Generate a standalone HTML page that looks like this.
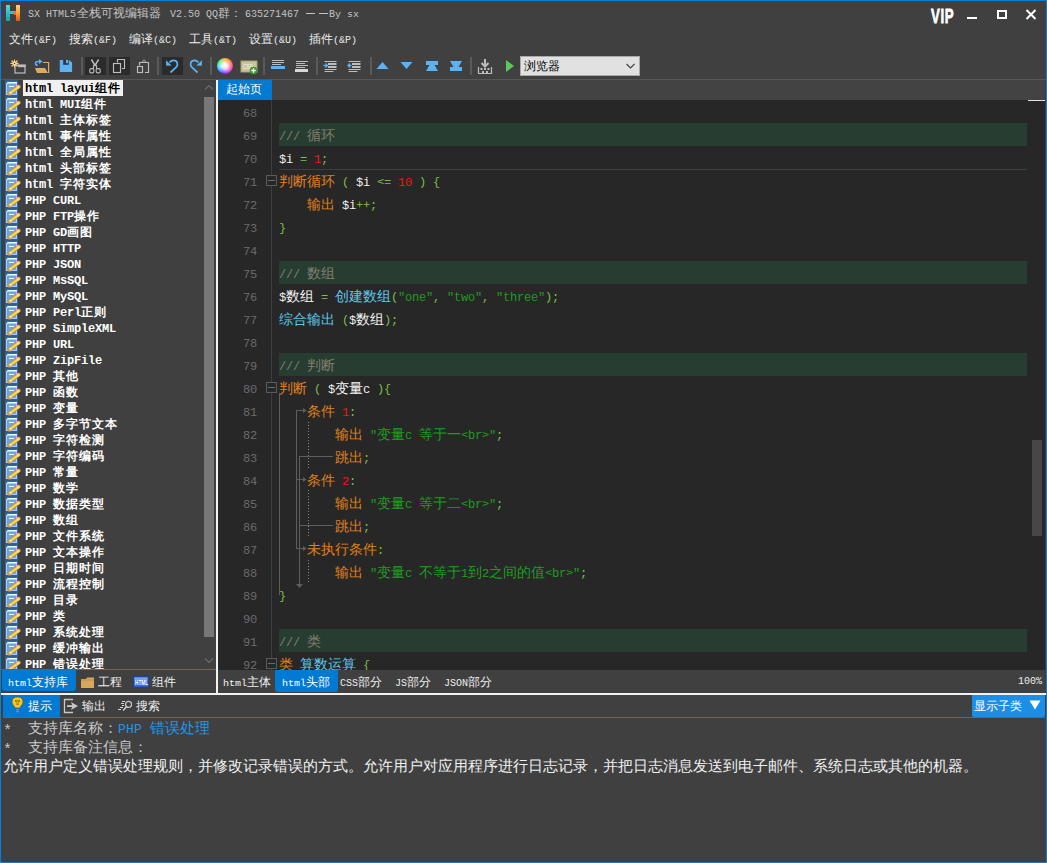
<!DOCTYPE html>
<html><head><meta charset="utf-8"><style>
@font-face{font-family:"LM";src:local("Liberation Mono");unicode-range:U+0020-007E;size-adjust:83.333%}
@font-face{font-family:"LM";src:local("Liberation Mono Bold"),local("LiberationMono-Bold");font-weight:bold;unicode-range:U+0020-007E;size-adjust:83.333%}
html,body{margin:0;padding:0;width:1047px;height:863px;overflow:hidden;background:#404040}
.r{position:absolute;display:block}
.t{position:absolute;white-space:pre;font-family:"LM","Liberation Sans",sans-serif}
@font-face{font-family:"LMB";src:local("Liberation Mono Bold"),local("LiberationMono-Bold");unicode-range:U+0020-007E;size-adjust:97.2%}
.lb{font-family:"LMB","Liberation Sans",sans-serif;font-weight:bold}
.cj{letter-spacing:1px}
@font-face{font-family:"LM8";src:local("Liberation Mono");unicode-range:U+0020-007E;size-adjust:88.89%}
.p{font-family:"LM8","Liberation Sans",sans-serif}
.c{font-family:"LM","Liberation Sans",sans-serif;font-weight:350}
</style></head><body>
<div class="r" style="left:0px;top:0px;width:1047px;height:863px;background:#0580dc;"></div>
<div class="r" style="left:1px;top:1px;width:1045px;height:861px;background:#404040;"></div>
<svg class="r" style="left:5px;top:4px;" width="17" height="18" viewBox="0 0 17 18"><defs><linearGradient id="hl" x1="0" y1="0" x2="0" y2="1"><stop offset="0" stop-color="#5fd6d8"/><stop offset="1" stop-color="#139fa6"/></linearGradient>
<linearGradient id="hr" x1="0" y1="0" x2="0" y2="1"><stop offset="0" stop-color="#ffd27a"/><stop offset="0.5" stop-color="#f5a531"/><stop offset="1" stop-color="#e0541c"/></linearGradient></defs>
<rect x="1" y="1" width="4" height="16" fill="url(#hl)"/><rect x="5" y="7" width="6" height="3" fill="#2cc4d0"/><rect x="9" y="8" width="2" height="3" fill="#f06a1e"/>
<rect x="11" y="1" width="4" height="16" fill="url(#hr)"/></svg>
<div class="t u" style="left:28px;top:9px;font-size:12px;line-height:12px;color:#c4c4c4;">SX HTML5</div>
<div class="t u" style="left:77px;top:9px;font-size:12px;line-height:12px;color:#c4c4c4;">全栈可视编辑器</div>
<div class="t u" style="left:170px;top:9px;font-size:12px;line-height:12px;color:#c4c4c4;">V2.50 QQ</div>
<div class="t u" style="left:218px;top:9px;font-size:12px;line-height:12px;color:#c4c4c4;">群：</div>
<div class="t u" style="left:245px;top:9px;font-size:12px;line-height:12px;color:#c4c4c4;">635271467</div>
<div class="t u" style="left:329px;top:9px;font-size:12px;line-height:12px;color:#c4c4c4;">By sx</div>
<div class="r" style="left:306px;top:13px;width:9px;height:1px;background:#c4c4c4;"></div>
<div class="r" style="left:319px;top:13px;width:9px;height:1px;background:#c4c4c4;"></div>
<div class="t" style="left:931px;top:6px;font-family:'Liberation Sans',sans-serif;font-weight:bold;font-size:20px;line-height:20px;color:#fff;transform:scaleX(0.66);transform-origin:0 0;letter-spacing:1px;-webkit-text-stroke:0.8px #fff">VIP</div>
<div class="r" style="left:967px;top:17px;width:10px;height:2px;background:#fff;"></div>
<div class="r" style="left:997px;top:10px;width:6px;height:5px;border:2px solid #fff"></div>
<svg class="r" style="left:1025px;top:9px;" width="12" height="11" viewBox="0 0 12 11"><path d="M1.5 1 L10.5 10 M10.5 1 L1.5 10" stroke="#fff" stroke-width="2"/></svg>
<div class="t u" style="left:9px;top:35px;font-size:12px;line-height:12px;color:#ececec;">文件(&amp;F)</div>
<div class="t u" style="left:69px;top:35px;font-size:12px;line-height:12px;color:#ececec;">搜索(&amp;F)</div>
<div class="t u" style="left:129px;top:35px;font-size:12px;line-height:12px;color:#ececec;">编译(&amp;C)</div>
<div class="t u" style="left:189px;top:35px;font-size:12px;line-height:12px;color:#ececec;">工具(&amp;T)</div>
<div class="t u" style="left:249px;top:35px;font-size:12px;line-height:12px;color:#ececec;">设置(&amp;U)</div>
<div class="t u" style="left:309px;top:35px;font-size:12px;line-height:12px;color:#ececec;">插件(&amp;P)</div>
<div class="r" style="left:85px;top:57px;width:21px;height:18px;background:#2b2b2b;"></div>
<div class="r" style="left:109px;top:57px;width:21px;height:18px;background:#2b2b2b;"></div>
<div class="r" style="left:162px;top:57px;width:21px;height:18px;background:#2b2b2b;"></div>
<div class="r" style="left:81px;top:57px;width:2px;height:18px;background:#5a5a5a;"></div>
<div class="r" style="left:157px;top:57px;width:2px;height:18px;background:#5a5a5a;"></div>
<div class="r" style="left:210px;top:57px;width:2px;height:18px;background:#5a5a5a;"></div>
<div class="r" style="left:263px;top:57px;width:2px;height:18px;background:#5a5a5a;"></div>
<div class="r" style="left:316px;top:57px;width:2px;height:18px;background:#5a5a5a;"></div>
<div class="r" style="left:370px;top:57px;width:2px;height:18px;background:#5a5a5a;"></div>
<div class="r" style="left:470px;top:57px;width:2px;height:18px;background:#5a5a5a;"></div>
<svg class="r" style="left:8px;top:56px;" width="20" height="20" viewBox="0 0 20 20"><rect x="7" y="9" width="10" height="8" fill="none" stroke="#bdbdbd" stroke-width="1.2"/><rect x="10" y="9" width="7.6" height="2.2" fill="#bdbdbd"/>
<g stroke="#ffd28a" stroke-width="1.2" stroke-linecap="round"><path d="M6.5 4 V11 M3 7.4 H10 M4 5 L9 10 M9 5 L4 10"/></g><circle cx="6.5" cy="7.4" r="1.8" fill="#ffd28a"/><circle cx="6.5" cy="7.4" r="0.7" fill="#404040"/></svg>
<svg class="r" style="left:34px;top:58px;" width="17" height="17" viewBox="0 0 17 17"><path d="M9 4.5 H14.6 V15" fill="none" stroke="#e0aa60" stroke-width="1.2"/><path d="M1 10 H11 L14 15 H3 Z" fill="#dcaa62"/>
<path d="M3.5 7.5 C0.5 6.5 0.8 3.5 4.5 3.5 H6.5" fill="none" stroke="#5cb2f2" stroke-width="1.6"/><path d="M5 1 L8.5 3.5 L5 6 Z" fill="#5cb2f2"/></svg>
<svg class="r" style="left:59px;top:59px;" width="14" height="14" viewBox="0 0 14 14"><path d="M0.8 0.9 H10 L13.1 3.6 V13.1 H0.8 Z" fill="#5cb2f2"/><rect x="4.2" y="0.9" width="5.5" height="4.9" fill="#363636"/><rect x="7" y="0.9" width="2" height="3.3" fill="#5cb2f2"/></svg>
<svg class="r" style="left:88px;top:58px;" width="15" height="16" viewBox="0 0 15 16"><g fill="none" stroke="#bdbdbd"><path d="M3.4 1.5 L7 7.3 L10.6 1.5" stroke-width="1.5"/><path d="M5.5 7.2 V10.8 M8.5 7.2 V10.8 M5.5 7.2 H8.5" stroke-width="1.1"/><rect x="1.8" y="10.6" width="4" height="4.3" rx="1.2" stroke-width="1.1"/><rect x="8.2" y="10.6" width="4" height="4.3" rx="1.2" stroke-width="1.1"/></g></svg>
<svg class="r" style="left:112px;top:58px;" width="15" height="16" viewBox="0 0 15 16"><g fill="none" stroke="#bdbdbd" stroke-width="1.15"><path d="M5.5 4.5 V1.5 H12.5 V10.5 H10"/><rect x="1.5" y="5.5" width="7" height="9"/></g></svg>
<svg class="r" style="left:136px;top:58px;" width="15" height="16" viewBox="0 0 15 16"><g fill="none" stroke="#bdbdbd" stroke-width="1.15"><path d="M3.5 7.5 V4.5 H12.5 V14.5 H9"/><rect x="1.5" y="8.5" width="5" height="6"/></g><path d="M5.6 5 L7 2 Q8 0.8 9 2 L10.4 5 Z" fill="#bdbdbd"/><circle cx="8" cy="3.2" r="0.9" fill="#404040"/></svg>
<svg class="r" style="left:164px;top:58px;" width="17" height="17" viewBox="0 0 17 17"><path d="M6.5 14.5 L12 9.5 C14.6 7 13.6 2.3 9.5 2.3 C8 2.3 6.8 3 5.6 4.4" fill="none" stroke="#5cb2f2" stroke-width="1.7"/><path d="M2 2.2 L2.2 7.8 L7.6 7.4 Z" fill="#5cb2f2"/></svg>
<svg class="r" style="left:188px;top:58px;" width="17" height="17" viewBox="0 0 17 17"><path d="M9.5 14.5 L4 9.5 C1.4 7 2.4 2.3 6.5 2.3 C8 2.3 9.2 3 10.4 4.4" fill="none" stroke="#5cb2f2" stroke-width="1.7"/><path d="M14 2.2 L13.8 7.8 L8.4 7.4 Z" fill="#5cb2f2"/></svg>
<div class="r" style="left:217px;top:58px;width:16px;height:16px;border-radius:50%;background:radial-gradient(circle at 50% 50%, #fff 0, rgba(255,255,255,0.85) 25%, rgba(255,255,255,0) 75%),conic-gradient(#ffa000, #ff2a50 90deg, #c000e0 150deg, #3020ff 200deg, #10d0ff 260deg, #30f060 310deg, #ffa000)"></div>
<svg class="r" style="left:240px;top:60px;" width="19" height="15" viewBox="0 0 19 15"><rect x="1" y="1" width="16" height="11" fill="#c9c59a" stroke="#a6a278"/><text x="3" y="9" font-size="7" fill="#f4f4e8" font-family="Liberation Sans" textLength="10" lengthAdjust="spacingAndGlyphs">CSS</text>
<circle cx="13.5" cy="10.5" r="3.8" fill="#3a9a30"/><path d="M13.5 8.3 V12.7 M11.3 10.5 H15.7" stroke="#fff" stroke-width="1.3"/></svg>
<svg class="r" style="left:271px;top:59px;" width="15" height="12" viewBox="0 0 15 12"><g fill="#bdbdbd"><rect x="1" y="1" width="12" height="1"/><rect x="1" y="3" width="12" height="1"/><rect x="1" y="5" width="9" height="1"/></g><rect x="0" y="7" width="14" height="3" fill="#5cb2f2"/></svg>
<svg class="r" style="left:295px;top:59px;" width="14" height="14" viewBox="0 0 14 14"><g fill="#bdbdbd"><rect x="1" y="2" width="12" height="1"/><rect x="1" y="4" width="9" height="1"/><rect x="1" y="6" width="12" height="1"/><rect x="1" y="8" width="9" height="1"/></g><rect x="0" y="10" width="13" height="3" fill="#d8d8d8"/></svg>
<svg class="r" style="left:323px;top:59px;" width="16" height="15" viewBox="0 0 16 15"><g fill="#bdbdbd"><rect x="1.5" y="2" width="12" height="1"/><rect x="5" y="4" width="8.5" height="2"/><rect x="5" y="7" width="8.5" height="2"/><rect x="1.5" y="10" width="12" height="1"/><rect x="1.5" y="12" width="9" height="1"/></g><path d="M0.5 6.5 H4 M2.5 4.5 L4.5 6.5 L2.5 8.5" stroke="#5cb2f2" stroke-width="1.3" fill="none"/></svg>
<svg class="r" style="left:347px;top:59px;" width="16" height="15" viewBox="0 0 16 15"><g fill="#bdbdbd"><rect x="1.5" y="2" width="12" height="1"/><rect x="5" y="4" width="8.5" height="2"/><rect x="5" y="7" width="8.5" height="2"/><rect x="1.5" y="10" width="12" height="1"/><rect x="1.5" y="12" width="9" height="1"/></g><path d="M1 6.5 H4.5 M3 4.5 L1 6.5 L3 8.5" stroke="#5cb2f2" stroke-width="1.3" fill="none"/></svg>
<svg class="r" style="left:376px;top:61px;" width="14" height="9" viewBox="0 0 14 9"><path d="M0.5 8 L6.5 1 L12.5 8 Z" fill="#5cb2f2"/></svg>
<svg class="r" style="left:400px;top:61px;" width="14" height="9" viewBox="0 0 14 9"><path d="M0.5 1 L6.5 8 L12.5 1 Z" fill="#5cb2f2"/></svg>
<svg class="r" style="left:425px;top:60px;" width="14" height="12" viewBox="0 0 14 12"><path d="M1 1 H13 V5 H9.5 L13 11 H1 L4.5 5 H1 Z" fill="#5cb2f2"/></svg>
<svg class="r" style="left:449px;top:60px;" width="14" height="12" viewBox="0 0 14 12"><path d="M1 1 H13 L9.5 7 H13 V11 H1 V7 H4.5 Z" fill="#5cb2f2"/></svg>
<svg class="r" style="left:477px;top:58px;" width="16" height="17" viewBox="0 0 16 17"><path d="M8 1 V8 M4.5 5 L8 8.5 L11.5 5" stroke="#bdbdbd" stroke-width="2" fill="none"/><path d="M1.5 9 V15.5 H14.5 V9" stroke="#bdbdbd" stroke-width="1.2" fill="none"/>
<g fill="#bdbdbd"><rect x="3.5" y="10" width="2" height="2"/><rect x="7" y="10" width="2" height="2"/><rect x="10.5" y="10" width="2" height="2"/><rect x="5" y="13" width="2" height="2"/><rect x="9" y="13" width="2" height="2"/></g></svg>
<svg class="r" style="left:505px;top:59px;" width="10" height="14" viewBox="0 0 10 14"><path d="M1 1 L9 7 L1 13 Z" fill="#5cc85c"/></svg>
<div class="r" style="left:520px;top:56px;width:118px;height:18px;background:#e1e1e1;border:1px solid #a9a9a9"></div>
<div class="t u" style="left:524px;top:62px;font-size:12px;line-height:12px;color:#000;">浏览器</div>
<svg class="r" style="left:626px;top:63px;" width="10" height="7" viewBox="0 0 10 7"><path d="M0.5 1 L4.5 5 L8.5 1" stroke="#444" stroke-width="1.2" fill="none"/></svg>
<div class="r" style="left:1px;top:79px;width:1045px;height:1px;background:#575757;"></div>
<div class="r" style="left:1px;top:80px;width:202px;height:589px;overflow:hidden">
<svg class="r" style="left:4px;top:0px" width="17" height="17" viewBox="0 0 17 17">
<rect x="0" y="0.3" width="13" height="15.5" fill="#3466b0"/><rect x="1" y="3" width="11" height="12" fill="#a9cdee"/><rect x="2" y="4" width="9" height="10" fill="#6fa5dc"/>
<rect x="2.2" y="2" width="9.8" height="1" fill="#f4f8ff"/><rect x="4" y="6" width="5" height="1" fill="#e8f4ff"/>
<path d="M4.5 13.6 L13.8 6.5" stroke="#d88a30" stroke-width="4" stroke-linecap="round"/><path d="M4.8 13.3 L13.5 6.8" stroke="#f8dc58" stroke-width="2.2"/>
<path d="M12.4 7.6 L14.2 6.2" stroke="#ffdcb0" stroke-width="2.6"/><path d="M4.3 13.8 L6.2 12.3" stroke="#ffd8a8" stroke-width="2.6"/></svg>
<div class="r" style="left:22px;top:0px;width:100px;height:16px;background:#f0f0f0"></div>
<div class="t lb" style="left:24px;top:3px;font-size:12px;line-height:12px;color:#000;">html layui<span class="cj">组件</span></div>
<svg class="r" style="left:4px;top:16px" width="17" height="17" viewBox="0 0 17 17">
<rect x="0" y="0.3" width="13" height="15.5" fill="#3466b0"/><rect x="1" y="3" width="11" height="12" fill="#a9cdee"/><rect x="2" y="4" width="9" height="10" fill="#6fa5dc"/>
<rect x="2.2" y="2" width="9.8" height="1" fill="#f4f8ff"/><rect x="4" y="6" width="5" height="1" fill="#e8f4ff"/>
<path d="M4.5 13.6 L13.8 6.5" stroke="#d88a30" stroke-width="4" stroke-linecap="round"/><path d="M4.8 13.3 L13.5 6.8" stroke="#f8dc58" stroke-width="2.2"/>
<path d="M12.4 7.6 L14.2 6.2" stroke="#ffdcb0" stroke-width="2.6"/><path d="M4.3 13.8 L6.2 12.3" stroke="#ffd8a8" stroke-width="2.6"/></svg>
<div class="t lb" style="left:24px;top:19px;font-size:12px;line-height:12px;color:#ffffff;">html MUI<span class="cj">组件</span></div>
<svg class="r" style="left:4px;top:32px" width="17" height="17" viewBox="0 0 17 17">
<rect x="0" y="0.3" width="13" height="15.5" fill="#3466b0"/><rect x="1" y="3" width="11" height="12" fill="#a9cdee"/><rect x="2" y="4" width="9" height="10" fill="#6fa5dc"/>
<rect x="2.2" y="2" width="9.8" height="1" fill="#f4f8ff"/><rect x="4" y="6" width="5" height="1" fill="#e8f4ff"/>
<path d="M4.5 13.6 L13.8 6.5" stroke="#d88a30" stroke-width="4" stroke-linecap="round"/><path d="M4.8 13.3 L13.5 6.8" stroke="#f8dc58" stroke-width="2.2"/>
<path d="M12.4 7.6 L14.2 6.2" stroke="#ffdcb0" stroke-width="2.6"/><path d="M4.3 13.8 L6.2 12.3" stroke="#ffd8a8" stroke-width="2.6"/></svg>
<div class="t lb" style="left:24px;top:35px;font-size:12px;line-height:12px;color:#ffffff;">html <span class="cj">主体标签</span></div>
<svg class="r" style="left:4px;top:48px" width="17" height="17" viewBox="0 0 17 17">
<rect x="0" y="0.3" width="13" height="15.5" fill="#3466b0"/><rect x="1" y="3" width="11" height="12" fill="#a9cdee"/><rect x="2" y="4" width="9" height="10" fill="#6fa5dc"/>
<rect x="2.2" y="2" width="9.8" height="1" fill="#f4f8ff"/><rect x="4" y="6" width="5" height="1" fill="#e8f4ff"/>
<path d="M4.5 13.6 L13.8 6.5" stroke="#d88a30" stroke-width="4" stroke-linecap="round"/><path d="M4.8 13.3 L13.5 6.8" stroke="#f8dc58" stroke-width="2.2"/>
<path d="M12.4 7.6 L14.2 6.2" stroke="#ffdcb0" stroke-width="2.6"/><path d="M4.3 13.8 L6.2 12.3" stroke="#ffd8a8" stroke-width="2.6"/></svg>
<div class="t lb" style="left:24px;top:51px;font-size:12px;line-height:12px;color:#ffffff;">html <span class="cj">事件属性</span></div>
<svg class="r" style="left:4px;top:64px" width="17" height="17" viewBox="0 0 17 17">
<rect x="0" y="0.3" width="13" height="15.5" fill="#3466b0"/><rect x="1" y="3" width="11" height="12" fill="#a9cdee"/><rect x="2" y="4" width="9" height="10" fill="#6fa5dc"/>
<rect x="2.2" y="2" width="9.8" height="1" fill="#f4f8ff"/><rect x="4" y="6" width="5" height="1" fill="#e8f4ff"/>
<path d="M4.5 13.6 L13.8 6.5" stroke="#d88a30" stroke-width="4" stroke-linecap="round"/><path d="M4.8 13.3 L13.5 6.8" stroke="#f8dc58" stroke-width="2.2"/>
<path d="M12.4 7.6 L14.2 6.2" stroke="#ffdcb0" stroke-width="2.6"/><path d="M4.3 13.8 L6.2 12.3" stroke="#ffd8a8" stroke-width="2.6"/></svg>
<div class="t lb" style="left:24px;top:67px;font-size:12px;line-height:12px;color:#ffffff;">html <span class="cj">全局属性</span></div>
<svg class="r" style="left:4px;top:80px" width="17" height="17" viewBox="0 0 17 17">
<rect x="0" y="0.3" width="13" height="15.5" fill="#3466b0"/><rect x="1" y="3" width="11" height="12" fill="#a9cdee"/><rect x="2" y="4" width="9" height="10" fill="#6fa5dc"/>
<rect x="2.2" y="2" width="9.8" height="1" fill="#f4f8ff"/><rect x="4" y="6" width="5" height="1" fill="#e8f4ff"/>
<path d="M4.5 13.6 L13.8 6.5" stroke="#d88a30" stroke-width="4" stroke-linecap="round"/><path d="M4.8 13.3 L13.5 6.8" stroke="#f8dc58" stroke-width="2.2"/>
<path d="M12.4 7.6 L14.2 6.2" stroke="#ffdcb0" stroke-width="2.6"/><path d="M4.3 13.8 L6.2 12.3" stroke="#ffd8a8" stroke-width="2.6"/></svg>
<div class="t lb" style="left:24px;top:83px;font-size:12px;line-height:12px;color:#ffffff;">html <span class="cj">头部标签</span></div>
<svg class="r" style="left:4px;top:96px" width="17" height="17" viewBox="0 0 17 17">
<rect x="0" y="0.3" width="13" height="15.5" fill="#3466b0"/><rect x="1" y="3" width="11" height="12" fill="#a9cdee"/><rect x="2" y="4" width="9" height="10" fill="#6fa5dc"/>
<rect x="2.2" y="2" width="9.8" height="1" fill="#f4f8ff"/><rect x="4" y="6" width="5" height="1" fill="#e8f4ff"/>
<path d="M4.5 13.6 L13.8 6.5" stroke="#d88a30" stroke-width="4" stroke-linecap="round"/><path d="M4.8 13.3 L13.5 6.8" stroke="#f8dc58" stroke-width="2.2"/>
<path d="M12.4 7.6 L14.2 6.2" stroke="#ffdcb0" stroke-width="2.6"/><path d="M4.3 13.8 L6.2 12.3" stroke="#ffd8a8" stroke-width="2.6"/></svg>
<div class="t lb" style="left:24px;top:99px;font-size:12px;line-height:12px;color:#ffffff;">html <span class="cj">字符实体</span></div>
<svg class="r" style="left:4px;top:112px" width="17" height="17" viewBox="0 0 17 17">
<rect x="0" y="0.3" width="13" height="15.5" fill="#3466b0"/><rect x="1" y="3" width="11" height="12" fill="#a9cdee"/><rect x="2" y="4" width="9" height="10" fill="#6fa5dc"/>
<rect x="2.2" y="2" width="9.8" height="1" fill="#f4f8ff"/><rect x="4" y="6" width="5" height="1" fill="#e8f4ff"/>
<path d="M4.5 13.6 L13.8 6.5" stroke="#d88a30" stroke-width="4" stroke-linecap="round"/><path d="M4.8 13.3 L13.5 6.8" stroke="#f8dc58" stroke-width="2.2"/>
<path d="M12.4 7.6 L14.2 6.2" stroke="#ffdcb0" stroke-width="2.6"/><path d="M4.3 13.8 L6.2 12.3" stroke="#ffd8a8" stroke-width="2.6"/></svg>
<div class="t lb" style="left:24px;top:115px;font-size:12px;line-height:12px;color:#ffffff;">PHP CURL</div>
<svg class="r" style="left:4px;top:128px" width="17" height="17" viewBox="0 0 17 17">
<rect x="0" y="0.3" width="13" height="15.5" fill="#3466b0"/><rect x="1" y="3" width="11" height="12" fill="#a9cdee"/><rect x="2" y="4" width="9" height="10" fill="#6fa5dc"/>
<rect x="2.2" y="2" width="9.8" height="1" fill="#f4f8ff"/><rect x="4" y="6" width="5" height="1" fill="#e8f4ff"/>
<path d="M4.5 13.6 L13.8 6.5" stroke="#d88a30" stroke-width="4" stroke-linecap="round"/><path d="M4.8 13.3 L13.5 6.8" stroke="#f8dc58" stroke-width="2.2"/>
<path d="M12.4 7.6 L14.2 6.2" stroke="#ffdcb0" stroke-width="2.6"/><path d="M4.3 13.8 L6.2 12.3" stroke="#ffd8a8" stroke-width="2.6"/></svg>
<div class="t lb" style="left:24px;top:131px;font-size:12px;line-height:12px;color:#ffffff;">PHP FTP<span class="cj">操作</span></div>
<svg class="r" style="left:4px;top:144px" width="17" height="17" viewBox="0 0 17 17">
<rect x="0" y="0.3" width="13" height="15.5" fill="#3466b0"/><rect x="1" y="3" width="11" height="12" fill="#a9cdee"/><rect x="2" y="4" width="9" height="10" fill="#6fa5dc"/>
<rect x="2.2" y="2" width="9.8" height="1" fill="#f4f8ff"/><rect x="4" y="6" width="5" height="1" fill="#e8f4ff"/>
<path d="M4.5 13.6 L13.8 6.5" stroke="#d88a30" stroke-width="4" stroke-linecap="round"/><path d="M4.8 13.3 L13.5 6.8" stroke="#f8dc58" stroke-width="2.2"/>
<path d="M12.4 7.6 L14.2 6.2" stroke="#ffdcb0" stroke-width="2.6"/><path d="M4.3 13.8 L6.2 12.3" stroke="#ffd8a8" stroke-width="2.6"/></svg>
<div class="t lb" style="left:24px;top:147px;font-size:12px;line-height:12px;color:#ffffff;">PHP GD<span class="cj">画图</span></div>
<svg class="r" style="left:4px;top:160px" width="17" height="17" viewBox="0 0 17 17">
<rect x="0" y="0.3" width="13" height="15.5" fill="#3466b0"/><rect x="1" y="3" width="11" height="12" fill="#a9cdee"/><rect x="2" y="4" width="9" height="10" fill="#6fa5dc"/>
<rect x="2.2" y="2" width="9.8" height="1" fill="#f4f8ff"/><rect x="4" y="6" width="5" height="1" fill="#e8f4ff"/>
<path d="M4.5 13.6 L13.8 6.5" stroke="#d88a30" stroke-width="4" stroke-linecap="round"/><path d="M4.8 13.3 L13.5 6.8" stroke="#f8dc58" stroke-width="2.2"/>
<path d="M12.4 7.6 L14.2 6.2" stroke="#ffdcb0" stroke-width="2.6"/><path d="M4.3 13.8 L6.2 12.3" stroke="#ffd8a8" stroke-width="2.6"/></svg>
<div class="t lb" style="left:24px;top:163px;font-size:12px;line-height:12px;color:#ffffff;">PHP HTTP</div>
<svg class="r" style="left:4px;top:176px" width="17" height="17" viewBox="0 0 17 17">
<rect x="0" y="0.3" width="13" height="15.5" fill="#3466b0"/><rect x="1" y="3" width="11" height="12" fill="#a9cdee"/><rect x="2" y="4" width="9" height="10" fill="#6fa5dc"/>
<rect x="2.2" y="2" width="9.8" height="1" fill="#f4f8ff"/><rect x="4" y="6" width="5" height="1" fill="#e8f4ff"/>
<path d="M4.5 13.6 L13.8 6.5" stroke="#d88a30" stroke-width="4" stroke-linecap="round"/><path d="M4.8 13.3 L13.5 6.8" stroke="#f8dc58" stroke-width="2.2"/>
<path d="M12.4 7.6 L14.2 6.2" stroke="#ffdcb0" stroke-width="2.6"/><path d="M4.3 13.8 L6.2 12.3" stroke="#ffd8a8" stroke-width="2.6"/></svg>
<div class="t lb" style="left:24px;top:179px;font-size:12px;line-height:12px;color:#ffffff;">PHP JSON</div>
<svg class="r" style="left:4px;top:192px" width="17" height="17" viewBox="0 0 17 17">
<rect x="0" y="0.3" width="13" height="15.5" fill="#3466b0"/><rect x="1" y="3" width="11" height="12" fill="#a9cdee"/><rect x="2" y="4" width="9" height="10" fill="#6fa5dc"/>
<rect x="2.2" y="2" width="9.8" height="1" fill="#f4f8ff"/><rect x="4" y="6" width="5" height="1" fill="#e8f4ff"/>
<path d="M4.5 13.6 L13.8 6.5" stroke="#d88a30" stroke-width="4" stroke-linecap="round"/><path d="M4.8 13.3 L13.5 6.8" stroke="#f8dc58" stroke-width="2.2"/>
<path d="M12.4 7.6 L14.2 6.2" stroke="#ffdcb0" stroke-width="2.6"/><path d="M4.3 13.8 L6.2 12.3" stroke="#ffd8a8" stroke-width="2.6"/></svg>
<div class="t lb" style="left:24px;top:195px;font-size:12px;line-height:12px;color:#ffffff;">PHP MsSQL</div>
<svg class="r" style="left:4px;top:208px" width="17" height="17" viewBox="0 0 17 17">
<rect x="0" y="0.3" width="13" height="15.5" fill="#3466b0"/><rect x="1" y="3" width="11" height="12" fill="#a9cdee"/><rect x="2" y="4" width="9" height="10" fill="#6fa5dc"/>
<rect x="2.2" y="2" width="9.8" height="1" fill="#f4f8ff"/><rect x="4" y="6" width="5" height="1" fill="#e8f4ff"/>
<path d="M4.5 13.6 L13.8 6.5" stroke="#d88a30" stroke-width="4" stroke-linecap="round"/><path d="M4.8 13.3 L13.5 6.8" stroke="#f8dc58" stroke-width="2.2"/>
<path d="M12.4 7.6 L14.2 6.2" stroke="#ffdcb0" stroke-width="2.6"/><path d="M4.3 13.8 L6.2 12.3" stroke="#ffd8a8" stroke-width="2.6"/></svg>
<div class="t lb" style="left:24px;top:211px;font-size:12px;line-height:12px;color:#ffffff;">PHP MySQL</div>
<svg class="r" style="left:4px;top:224px" width="17" height="17" viewBox="0 0 17 17">
<rect x="0" y="0.3" width="13" height="15.5" fill="#3466b0"/><rect x="1" y="3" width="11" height="12" fill="#a9cdee"/><rect x="2" y="4" width="9" height="10" fill="#6fa5dc"/>
<rect x="2.2" y="2" width="9.8" height="1" fill="#f4f8ff"/><rect x="4" y="6" width="5" height="1" fill="#e8f4ff"/>
<path d="M4.5 13.6 L13.8 6.5" stroke="#d88a30" stroke-width="4" stroke-linecap="round"/><path d="M4.8 13.3 L13.5 6.8" stroke="#f8dc58" stroke-width="2.2"/>
<path d="M12.4 7.6 L14.2 6.2" stroke="#ffdcb0" stroke-width="2.6"/><path d="M4.3 13.8 L6.2 12.3" stroke="#ffd8a8" stroke-width="2.6"/></svg>
<div class="t lb" style="left:24px;top:227px;font-size:12px;line-height:12px;color:#ffffff;">PHP Perl<span class="cj">正则</span></div>
<svg class="r" style="left:4px;top:240px" width="17" height="17" viewBox="0 0 17 17">
<rect x="0" y="0.3" width="13" height="15.5" fill="#3466b0"/><rect x="1" y="3" width="11" height="12" fill="#a9cdee"/><rect x="2" y="4" width="9" height="10" fill="#6fa5dc"/>
<rect x="2.2" y="2" width="9.8" height="1" fill="#f4f8ff"/><rect x="4" y="6" width="5" height="1" fill="#e8f4ff"/>
<path d="M4.5 13.6 L13.8 6.5" stroke="#d88a30" stroke-width="4" stroke-linecap="round"/><path d="M4.8 13.3 L13.5 6.8" stroke="#f8dc58" stroke-width="2.2"/>
<path d="M12.4 7.6 L14.2 6.2" stroke="#ffdcb0" stroke-width="2.6"/><path d="M4.3 13.8 L6.2 12.3" stroke="#ffd8a8" stroke-width="2.6"/></svg>
<div class="t lb" style="left:24px;top:243px;font-size:12px;line-height:12px;color:#ffffff;">PHP SimpleXML</div>
<svg class="r" style="left:4px;top:256px" width="17" height="17" viewBox="0 0 17 17">
<rect x="0" y="0.3" width="13" height="15.5" fill="#3466b0"/><rect x="1" y="3" width="11" height="12" fill="#a9cdee"/><rect x="2" y="4" width="9" height="10" fill="#6fa5dc"/>
<rect x="2.2" y="2" width="9.8" height="1" fill="#f4f8ff"/><rect x="4" y="6" width="5" height="1" fill="#e8f4ff"/>
<path d="M4.5 13.6 L13.8 6.5" stroke="#d88a30" stroke-width="4" stroke-linecap="round"/><path d="M4.8 13.3 L13.5 6.8" stroke="#f8dc58" stroke-width="2.2"/>
<path d="M12.4 7.6 L14.2 6.2" stroke="#ffdcb0" stroke-width="2.6"/><path d="M4.3 13.8 L6.2 12.3" stroke="#ffd8a8" stroke-width="2.6"/></svg>
<div class="t lb" style="left:24px;top:259px;font-size:12px;line-height:12px;color:#ffffff;">PHP URL</div>
<svg class="r" style="left:4px;top:272px" width="17" height="17" viewBox="0 0 17 17">
<rect x="0" y="0.3" width="13" height="15.5" fill="#3466b0"/><rect x="1" y="3" width="11" height="12" fill="#a9cdee"/><rect x="2" y="4" width="9" height="10" fill="#6fa5dc"/>
<rect x="2.2" y="2" width="9.8" height="1" fill="#f4f8ff"/><rect x="4" y="6" width="5" height="1" fill="#e8f4ff"/>
<path d="M4.5 13.6 L13.8 6.5" stroke="#d88a30" stroke-width="4" stroke-linecap="round"/><path d="M4.8 13.3 L13.5 6.8" stroke="#f8dc58" stroke-width="2.2"/>
<path d="M12.4 7.6 L14.2 6.2" stroke="#ffdcb0" stroke-width="2.6"/><path d="M4.3 13.8 L6.2 12.3" stroke="#ffd8a8" stroke-width="2.6"/></svg>
<div class="t lb" style="left:24px;top:275px;font-size:12px;line-height:12px;color:#ffffff;">PHP ZipFile</div>
<svg class="r" style="left:4px;top:288px" width="17" height="17" viewBox="0 0 17 17">
<rect x="0" y="0.3" width="13" height="15.5" fill="#3466b0"/><rect x="1" y="3" width="11" height="12" fill="#a9cdee"/><rect x="2" y="4" width="9" height="10" fill="#6fa5dc"/>
<rect x="2.2" y="2" width="9.8" height="1" fill="#f4f8ff"/><rect x="4" y="6" width="5" height="1" fill="#e8f4ff"/>
<path d="M4.5 13.6 L13.8 6.5" stroke="#d88a30" stroke-width="4" stroke-linecap="round"/><path d="M4.8 13.3 L13.5 6.8" stroke="#f8dc58" stroke-width="2.2"/>
<path d="M12.4 7.6 L14.2 6.2" stroke="#ffdcb0" stroke-width="2.6"/><path d="M4.3 13.8 L6.2 12.3" stroke="#ffd8a8" stroke-width="2.6"/></svg>
<div class="t lb" style="left:24px;top:291px;font-size:12px;line-height:12px;color:#ffffff;">PHP <span class="cj">其他</span></div>
<svg class="r" style="left:4px;top:304px" width="17" height="17" viewBox="0 0 17 17">
<rect x="0" y="0.3" width="13" height="15.5" fill="#3466b0"/><rect x="1" y="3" width="11" height="12" fill="#a9cdee"/><rect x="2" y="4" width="9" height="10" fill="#6fa5dc"/>
<rect x="2.2" y="2" width="9.8" height="1" fill="#f4f8ff"/><rect x="4" y="6" width="5" height="1" fill="#e8f4ff"/>
<path d="M4.5 13.6 L13.8 6.5" stroke="#d88a30" stroke-width="4" stroke-linecap="round"/><path d="M4.8 13.3 L13.5 6.8" stroke="#f8dc58" stroke-width="2.2"/>
<path d="M12.4 7.6 L14.2 6.2" stroke="#ffdcb0" stroke-width="2.6"/><path d="M4.3 13.8 L6.2 12.3" stroke="#ffd8a8" stroke-width="2.6"/></svg>
<div class="t lb" style="left:24px;top:307px;font-size:12px;line-height:12px;color:#ffffff;">PHP <span class="cj">函数</span></div>
<svg class="r" style="left:4px;top:320px" width="17" height="17" viewBox="0 0 17 17">
<rect x="0" y="0.3" width="13" height="15.5" fill="#3466b0"/><rect x="1" y="3" width="11" height="12" fill="#a9cdee"/><rect x="2" y="4" width="9" height="10" fill="#6fa5dc"/>
<rect x="2.2" y="2" width="9.8" height="1" fill="#f4f8ff"/><rect x="4" y="6" width="5" height="1" fill="#e8f4ff"/>
<path d="M4.5 13.6 L13.8 6.5" stroke="#d88a30" stroke-width="4" stroke-linecap="round"/><path d="M4.8 13.3 L13.5 6.8" stroke="#f8dc58" stroke-width="2.2"/>
<path d="M12.4 7.6 L14.2 6.2" stroke="#ffdcb0" stroke-width="2.6"/><path d="M4.3 13.8 L6.2 12.3" stroke="#ffd8a8" stroke-width="2.6"/></svg>
<div class="t lb" style="left:24px;top:323px;font-size:12px;line-height:12px;color:#ffffff;">PHP <span class="cj">变量</span></div>
<svg class="r" style="left:4px;top:336px" width="17" height="17" viewBox="0 0 17 17">
<rect x="0" y="0.3" width="13" height="15.5" fill="#3466b0"/><rect x="1" y="3" width="11" height="12" fill="#a9cdee"/><rect x="2" y="4" width="9" height="10" fill="#6fa5dc"/>
<rect x="2.2" y="2" width="9.8" height="1" fill="#f4f8ff"/><rect x="4" y="6" width="5" height="1" fill="#e8f4ff"/>
<path d="M4.5 13.6 L13.8 6.5" stroke="#d88a30" stroke-width="4" stroke-linecap="round"/><path d="M4.8 13.3 L13.5 6.8" stroke="#f8dc58" stroke-width="2.2"/>
<path d="M12.4 7.6 L14.2 6.2" stroke="#ffdcb0" stroke-width="2.6"/><path d="M4.3 13.8 L6.2 12.3" stroke="#ffd8a8" stroke-width="2.6"/></svg>
<div class="t lb" style="left:24px;top:339px;font-size:12px;line-height:12px;color:#ffffff;">PHP <span class="cj">多字节文本</span></div>
<svg class="r" style="left:4px;top:352px" width="17" height="17" viewBox="0 0 17 17">
<rect x="0" y="0.3" width="13" height="15.5" fill="#3466b0"/><rect x="1" y="3" width="11" height="12" fill="#a9cdee"/><rect x="2" y="4" width="9" height="10" fill="#6fa5dc"/>
<rect x="2.2" y="2" width="9.8" height="1" fill="#f4f8ff"/><rect x="4" y="6" width="5" height="1" fill="#e8f4ff"/>
<path d="M4.5 13.6 L13.8 6.5" stroke="#d88a30" stroke-width="4" stroke-linecap="round"/><path d="M4.8 13.3 L13.5 6.8" stroke="#f8dc58" stroke-width="2.2"/>
<path d="M12.4 7.6 L14.2 6.2" stroke="#ffdcb0" stroke-width="2.6"/><path d="M4.3 13.8 L6.2 12.3" stroke="#ffd8a8" stroke-width="2.6"/></svg>
<div class="t lb" style="left:24px;top:355px;font-size:12px;line-height:12px;color:#ffffff;">PHP <span class="cj">字符检测</span></div>
<svg class="r" style="left:4px;top:368px" width="17" height="17" viewBox="0 0 17 17">
<rect x="0" y="0.3" width="13" height="15.5" fill="#3466b0"/><rect x="1" y="3" width="11" height="12" fill="#a9cdee"/><rect x="2" y="4" width="9" height="10" fill="#6fa5dc"/>
<rect x="2.2" y="2" width="9.8" height="1" fill="#f4f8ff"/><rect x="4" y="6" width="5" height="1" fill="#e8f4ff"/>
<path d="M4.5 13.6 L13.8 6.5" stroke="#d88a30" stroke-width="4" stroke-linecap="round"/><path d="M4.8 13.3 L13.5 6.8" stroke="#f8dc58" stroke-width="2.2"/>
<path d="M12.4 7.6 L14.2 6.2" stroke="#ffdcb0" stroke-width="2.6"/><path d="M4.3 13.8 L6.2 12.3" stroke="#ffd8a8" stroke-width="2.6"/></svg>
<div class="t lb" style="left:24px;top:371px;font-size:12px;line-height:12px;color:#ffffff;">PHP <span class="cj">字符编码</span></div>
<svg class="r" style="left:4px;top:384px" width="17" height="17" viewBox="0 0 17 17">
<rect x="0" y="0.3" width="13" height="15.5" fill="#3466b0"/><rect x="1" y="3" width="11" height="12" fill="#a9cdee"/><rect x="2" y="4" width="9" height="10" fill="#6fa5dc"/>
<rect x="2.2" y="2" width="9.8" height="1" fill="#f4f8ff"/><rect x="4" y="6" width="5" height="1" fill="#e8f4ff"/>
<path d="M4.5 13.6 L13.8 6.5" stroke="#d88a30" stroke-width="4" stroke-linecap="round"/><path d="M4.8 13.3 L13.5 6.8" stroke="#f8dc58" stroke-width="2.2"/>
<path d="M12.4 7.6 L14.2 6.2" stroke="#ffdcb0" stroke-width="2.6"/><path d="M4.3 13.8 L6.2 12.3" stroke="#ffd8a8" stroke-width="2.6"/></svg>
<div class="t lb" style="left:24px;top:387px;font-size:12px;line-height:12px;color:#ffffff;">PHP <span class="cj">常量</span></div>
<svg class="r" style="left:4px;top:400px" width="17" height="17" viewBox="0 0 17 17">
<rect x="0" y="0.3" width="13" height="15.5" fill="#3466b0"/><rect x="1" y="3" width="11" height="12" fill="#a9cdee"/><rect x="2" y="4" width="9" height="10" fill="#6fa5dc"/>
<rect x="2.2" y="2" width="9.8" height="1" fill="#f4f8ff"/><rect x="4" y="6" width="5" height="1" fill="#e8f4ff"/>
<path d="M4.5 13.6 L13.8 6.5" stroke="#d88a30" stroke-width="4" stroke-linecap="round"/><path d="M4.8 13.3 L13.5 6.8" stroke="#f8dc58" stroke-width="2.2"/>
<path d="M12.4 7.6 L14.2 6.2" stroke="#ffdcb0" stroke-width="2.6"/><path d="M4.3 13.8 L6.2 12.3" stroke="#ffd8a8" stroke-width="2.6"/></svg>
<div class="t lb" style="left:24px;top:403px;font-size:12px;line-height:12px;color:#ffffff;">PHP <span class="cj">数学</span></div>
<svg class="r" style="left:4px;top:416px" width="17" height="17" viewBox="0 0 17 17">
<rect x="0" y="0.3" width="13" height="15.5" fill="#3466b0"/><rect x="1" y="3" width="11" height="12" fill="#a9cdee"/><rect x="2" y="4" width="9" height="10" fill="#6fa5dc"/>
<rect x="2.2" y="2" width="9.8" height="1" fill="#f4f8ff"/><rect x="4" y="6" width="5" height="1" fill="#e8f4ff"/>
<path d="M4.5 13.6 L13.8 6.5" stroke="#d88a30" stroke-width="4" stroke-linecap="round"/><path d="M4.8 13.3 L13.5 6.8" stroke="#f8dc58" stroke-width="2.2"/>
<path d="M12.4 7.6 L14.2 6.2" stroke="#ffdcb0" stroke-width="2.6"/><path d="M4.3 13.8 L6.2 12.3" stroke="#ffd8a8" stroke-width="2.6"/></svg>
<div class="t lb" style="left:24px;top:419px;font-size:12px;line-height:12px;color:#ffffff;">PHP <span class="cj">数据类型</span></div>
<svg class="r" style="left:4px;top:432px" width="17" height="17" viewBox="0 0 17 17">
<rect x="0" y="0.3" width="13" height="15.5" fill="#3466b0"/><rect x="1" y="3" width="11" height="12" fill="#a9cdee"/><rect x="2" y="4" width="9" height="10" fill="#6fa5dc"/>
<rect x="2.2" y="2" width="9.8" height="1" fill="#f4f8ff"/><rect x="4" y="6" width="5" height="1" fill="#e8f4ff"/>
<path d="M4.5 13.6 L13.8 6.5" stroke="#d88a30" stroke-width="4" stroke-linecap="round"/><path d="M4.8 13.3 L13.5 6.8" stroke="#f8dc58" stroke-width="2.2"/>
<path d="M12.4 7.6 L14.2 6.2" stroke="#ffdcb0" stroke-width="2.6"/><path d="M4.3 13.8 L6.2 12.3" stroke="#ffd8a8" stroke-width="2.6"/></svg>
<div class="t lb" style="left:24px;top:435px;font-size:12px;line-height:12px;color:#ffffff;">PHP <span class="cj">数组</span></div>
<svg class="r" style="left:4px;top:448px" width="17" height="17" viewBox="0 0 17 17">
<rect x="0" y="0.3" width="13" height="15.5" fill="#3466b0"/><rect x="1" y="3" width="11" height="12" fill="#a9cdee"/><rect x="2" y="4" width="9" height="10" fill="#6fa5dc"/>
<rect x="2.2" y="2" width="9.8" height="1" fill="#f4f8ff"/><rect x="4" y="6" width="5" height="1" fill="#e8f4ff"/>
<path d="M4.5 13.6 L13.8 6.5" stroke="#d88a30" stroke-width="4" stroke-linecap="round"/><path d="M4.8 13.3 L13.5 6.8" stroke="#f8dc58" stroke-width="2.2"/>
<path d="M12.4 7.6 L14.2 6.2" stroke="#ffdcb0" stroke-width="2.6"/><path d="M4.3 13.8 L6.2 12.3" stroke="#ffd8a8" stroke-width="2.6"/></svg>
<div class="t lb" style="left:24px;top:451px;font-size:12px;line-height:12px;color:#ffffff;">PHP <span class="cj">文件系统</span></div>
<svg class="r" style="left:4px;top:464px" width="17" height="17" viewBox="0 0 17 17">
<rect x="0" y="0.3" width="13" height="15.5" fill="#3466b0"/><rect x="1" y="3" width="11" height="12" fill="#a9cdee"/><rect x="2" y="4" width="9" height="10" fill="#6fa5dc"/>
<rect x="2.2" y="2" width="9.8" height="1" fill="#f4f8ff"/><rect x="4" y="6" width="5" height="1" fill="#e8f4ff"/>
<path d="M4.5 13.6 L13.8 6.5" stroke="#d88a30" stroke-width="4" stroke-linecap="round"/><path d="M4.8 13.3 L13.5 6.8" stroke="#f8dc58" stroke-width="2.2"/>
<path d="M12.4 7.6 L14.2 6.2" stroke="#ffdcb0" stroke-width="2.6"/><path d="M4.3 13.8 L6.2 12.3" stroke="#ffd8a8" stroke-width="2.6"/></svg>
<div class="t lb" style="left:24px;top:467px;font-size:12px;line-height:12px;color:#ffffff;">PHP <span class="cj">文本操作</span></div>
<svg class="r" style="left:4px;top:480px" width="17" height="17" viewBox="0 0 17 17">
<rect x="0" y="0.3" width="13" height="15.5" fill="#3466b0"/><rect x="1" y="3" width="11" height="12" fill="#a9cdee"/><rect x="2" y="4" width="9" height="10" fill="#6fa5dc"/>
<rect x="2.2" y="2" width="9.8" height="1" fill="#f4f8ff"/><rect x="4" y="6" width="5" height="1" fill="#e8f4ff"/>
<path d="M4.5 13.6 L13.8 6.5" stroke="#d88a30" stroke-width="4" stroke-linecap="round"/><path d="M4.8 13.3 L13.5 6.8" stroke="#f8dc58" stroke-width="2.2"/>
<path d="M12.4 7.6 L14.2 6.2" stroke="#ffdcb0" stroke-width="2.6"/><path d="M4.3 13.8 L6.2 12.3" stroke="#ffd8a8" stroke-width="2.6"/></svg>
<div class="t lb" style="left:24px;top:483px;font-size:12px;line-height:12px;color:#ffffff;">PHP <span class="cj">日期时间</span></div>
<svg class="r" style="left:4px;top:496px" width="17" height="17" viewBox="0 0 17 17">
<rect x="0" y="0.3" width="13" height="15.5" fill="#3466b0"/><rect x="1" y="3" width="11" height="12" fill="#a9cdee"/><rect x="2" y="4" width="9" height="10" fill="#6fa5dc"/>
<rect x="2.2" y="2" width="9.8" height="1" fill="#f4f8ff"/><rect x="4" y="6" width="5" height="1" fill="#e8f4ff"/>
<path d="M4.5 13.6 L13.8 6.5" stroke="#d88a30" stroke-width="4" stroke-linecap="round"/><path d="M4.8 13.3 L13.5 6.8" stroke="#f8dc58" stroke-width="2.2"/>
<path d="M12.4 7.6 L14.2 6.2" stroke="#ffdcb0" stroke-width="2.6"/><path d="M4.3 13.8 L6.2 12.3" stroke="#ffd8a8" stroke-width="2.6"/></svg>
<div class="t lb" style="left:24px;top:499px;font-size:12px;line-height:12px;color:#ffffff;">PHP <span class="cj">流程控制</span></div>
<svg class="r" style="left:4px;top:512px" width="17" height="17" viewBox="0 0 17 17">
<rect x="0" y="0.3" width="13" height="15.5" fill="#3466b0"/><rect x="1" y="3" width="11" height="12" fill="#a9cdee"/><rect x="2" y="4" width="9" height="10" fill="#6fa5dc"/>
<rect x="2.2" y="2" width="9.8" height="1" fill="#f4f8ff"/><rect x="4" y="6" width="5" height="1" fill="#e8f4ff"/>
<path d="M4.5 13.6 L13.8 6.5" stroke="#d88a30" stroke-width="4" stroke-linecap="round"/><path d="M4.8 13.3 L13.5 6.8" stroke="#f8dc58" stroke-width="2.2"/>
<path d="M12.4 7.6 L14.2 6.2" stroke="#ffdcb0" stroke-width="2.6"/><path d="M4.3 13.8 L6.2 12.3" stroke="#ffd8a8" stroke-width="2.6"/></svg>
<div class="t lb" style="left:24px;top:515px;font-size:12px;line-height:12px;color:#ffffff;">PHP <span class="cj">目录</span></div>
<svg class="r" style="left:4px;top:528px" width="17" height="17" viewBox="0 0 17 17">
<rect x="0" y="0.3" width="13" height="15.5" fill="#3466b0"/><rect x="1" y="3" width="11" height="12" fill="#a9cdee"/><rect x="2" y="4" width="9" height="10" fill="#6fa5dc"/>
<rect x="2.2" y="2" width="9.8" height="1" fill="#f4f8ff"/><rect x="4" y="6" width="5" height="1" fill="#e8f4ff"/>
<path d="M4.5 13.6 L13.8 6.5" stroke="#d88a30" stroke-width="4" stroke-linecap="round"/><path d="M4.8 13.3 L13.5 6.8" stroke="#f8dc58" stroke-width="2.2"/>
<path d="M12.4 7.6 L14.2 6.2" stroke="#ffdcb0" stroke-width="2.6"/><path d="M4.3 13.8 L6.2 12.3" stroke="#ffd8a8" stroke-width="2.6"/></svg>
<div class="t lb" style="left:24px;top:531px;font-size:12px;line-height:12px;color:#ffffff;">PHP <span class="cj">类</span></div>
<svg class="r" style="left:4px;top:544px" width="17" height="17" viewBox="0 0 17 17">
<rect x="0" y="0.3" width="13" height="15.5" fill="#3466b0"/><rect x="1" y="3" width="11" height="12" fill="#a9cdee"/><rect x="2" y="4" width="9" height="10" fill="#6fa5dc"/>
<rect x="2.2" y="2" width="9.8" height="1" fill="#f4f8ff"/><rect x="4" y="6" width="5" height="1" fill="#e8f4ff"/>
<path d="M4.5 13.6 L13.8 6.5" stroke="#d88a30" stroke-width="4" stroke-linecap="round"/><path d="M4.8 13.3 L13.5 6.8" stroke="#f8dc58" stroke-width="2.2"/>
<path d="M12.4 7.6 L14.2 6.2" stroke="#ffdcb0" stroke-width="2.6"/><path d="M4.3 13.8 L6.2 12.3" stroke="#ffd8a8" stroke-width="2.6"/></svg>
<div class="t lb" style="left:24px;top:547px;font-size:12px;line-height:12px;color:#ffffff;">PHP <span class="cj">系统处理</span></div>
<svg class="r" style="left:4px;top:560px" width="17" height="17" viewBox="0 0 17 17">
<rect x="0" y="0.3" width="13" height="15.5" fill="#3466b0"/><rect x="1" y="3" width="11" height="12" fill="#a9cdee"/><rect x="2" y="4" width="9" height="10" fill="#6fa5dc"/>
<rect x="2.2" y="2" width="9.8" height="1" fill="#f4f8ff"/><rect x="4" y="6" width="5" height="1" fill="#e8f4ff"/>
<path d="M4.5 13.6 L13.8 6.5" stroke="#d88a30" stroke-width="4" stroke-linecap="round"/><path d="M4.8 13.3 L13.5 6.8" stroke="#f8dc58" stroke-width="2.2"/>
<path d="M12.4 7.6 L14.2 6.2" stroke="#ffdcb0" stroke-width="2.6"/><path d="M4.3 13.8 L6.2 12.3" stroke="#ffd8a8" stroke-width="2.6"/></svg>
<div class="t lb" style="left:24px;top:563px;font-size:12px;line-height:12px;color:#ffffff;">PHP <span class="cj">缓冲输出</span></div>
<svg class="r" style="left:4px;top:576px" width="17" height="17" viewBox="0 0 17 17">
<rect x="0" y="0.3" width="13" height="15.5" fill="#3466b0"/><rect x="1" y="3" width="11" height="12" fill="#a9cdee"/><rect x="2" y="4" width="9" height="10" fill="#6fa5dc"/>
<rect x="2.2" y="2" width="9.8" height="1" fill="#f4f8ff"/><rect x="4" y="6" width="5" height="1" fill="#e8f4ff"/>
<path d="M4.5 13.6 L13.8 6.5" stroke="#d88a30" stroke-width="4" stroke-linecap="round"/><path d="M4.8 13.3 L13.5 6.8" stroke="#f8dc58" stroke-width="2.2"/>
<path d="M12.4 7.6 L14.2 6.2" stroke="#ffdcb0" stroke-width="2.6"/><path d="M4.3 13.8 L6.2 12.3" stroke="#ffd8a8" stroke-width="2.6"/></svg>
<div class="t lb" style="left:24px;top:579px;font-size:12px;line-height:12px;color:#ffffff;">PHP <span class="cj">错误处理</span></div>
</div>
<svg class="r" style="left:204px;top:84px;" width="10" height="7" viewBox="0 0 10 7"><path d="M1 5.5 L5 1.5 L9 5.5" stroke="#6a6a6a" stroke-width="1.2" fill="none"/></svg>
<div class="r" style="left:204px;top:97px;width:10px;height:540px;background:#777777;"></div>
<svg class="r" style="left:204px;top:657px;" width="10" height="7" viewBox="0 0 10 7"><path d="M1 1.5 L5 5.5 L9 1.5" stroke="#6a6a6a" stroke-width="1.2" fill="none"/></svg>
<div class="r" style="left:1px;top:669px;width:215px;height:1px;background:#0580dc;"></div>
<div class="r" style="left:1px;top:670px;width:215px;height:23px;background:#404040;"></div>
<div class="r" style="left:2px;top:669px;width:74px;height:22px;background:#007ad2;border-radius:0 0 3px 3px"></div>
<div class="t u" style="left:8px;top:678px;font-size:12px;line-height:12px;color:#fff;">html支持库</div>
<svg class="r" style="left:80px;top:676px;" width="15" height="13" viewBox="0 0 15 13"><path d="M1 3 H6 L7 1.5 H14 V12 H1 Z" fill="#d9a75a"/><path d="M1 4 H14" stroke="#b8864a" stroke-width="0.8"/></svg>
<div class="t u" style="left:98px;top:678px;font-size:12px;line-height:12px;color:#eee;">工程</div>
<svg class="r" style="left:133px;top:676px;" width="17" height="12" viewBox="0 0 17 12"><rect x="0.5" y="0.5" width="15" height="10.5" fill="#3c6fe0" stroke="#2040a0"/><rect x="1.5" y="1.5" width="13" height="3" fill="#7aa0f0"/><text x="2" y="9" font-size="8" font-weight="bold" fill="#fff" font-family="Liberation Sans" textLength="13" lengthAdjust="spacingAndGlyphs">HTML</text></svg>
<div class="t u" style="left:152px;top:678px;font-size:12px;line-height:12px;color:#eee;">组件</div>
<div class="r" style="left:216px;top:80px;width:2px;height:613px;background:#f2f2f2;"></div>
<div class="r" style="left:218px;top:80px;width:828px;height:20px;background:#434343;"></div>
<div class="r" style="left:218px;top:80px;width:54px;height:20px;background:#007ad2;"></div>
<div class="t u" style="left:226px;top:85px;font-size:12px;line-height:12px;color:#fff;">起始页</div>
<div class="r" style="left:218px;top:100px;width:828px;height:570px;background:#272727;"></div>
<div class="r" style="left:1028px;top:100px;width:17px;height:1px;background:#e0e0e0;"></div>
<div class="r" style="left:271px;top:100px;width:1px;height:570px;background:#3c3c3c;"></div>
<div class="r" style="left:217px;top:100px;width:811px;height:570px;overflow:hidden">
<div class="t c" style="left:0px;top:7px;font-size:14px;line-height:14px;color:#6c6c6c;width:40px;text-align:right">68</div>
<div class="r" style="left:62px;top:23px;width:748px;height:23px;background:#283d31;"></div>
<div class="t c" style="left:0px;top:30px;font-size:14px;line-height:14px;color:#6c6c6c;width:40px;text-align:right">69</div>
<div class="t c" style="left:62px;top:30px;font-size:14px;line-height:14px;color:#f4f4f4;"><span style="color:#7f7f6f">/// 循环</span></div>
<div class="t c" style="left:0px;top:53px;font-size:14px;line-height:14px;color:#6c6c6c;width:40px;text-align:right">70</div>
<div class="t c" style="left:62px;top:53px;font-size:14px;line-height:14px;color:#f4f4f4;"><span style="color:#f4f4f4">$i</span><span style="color:#7cc04a"> = </span><span style="color:#ff1010">1</span><span style="color:#7cc04a">;</span></div>
<div class="t c" style="left:0px;top:76px;font-size:14px;line-height:14px;color:#6c6c6c;width:40px;text-align:right">71</div>
<div class="t c" style="left:62px;top:76px;font-size:14px;line-height:14px;color:#f4f4f4;"><span style="color:#e0801a">判断循环</span><span style="color:#7cc04a"> ( </span><span style="color:#f4f4f4">$i</span><span style="color:#7cc04a"> &lt;= </span><span style="color:#ff1010">10</span><span style="color:#7cc04a"> ) {</span></div>
<div class="t c" style="left:0px;top:99px;font-size:14px;line-height:14px;color:#6c6c6c;width:40px;text-align:right">72</div>
<div class="t c" style="left:62px;top:99px;font-size:14px;line-height:14px;color:#f4f4f4;">    <span style="color:#e0801a">输出</span> <span style="color:#f4f4f4">$i</span><span style="color:#7cc04a">++;</span></div>
<div class="t c" style="left:0px;top:122px;font-size:14px;line-height:14px;color:#6c6c6c;width:40px;text-align:right">73</div>
<div class="t c" style="left:62px;top:122px;font-size:14px;line-height:14px;color:#f4f4f4;"><span style="color:#7cc04a">}</span></div>
<div class="t c" style="left:0px;top:145px;font-size:14px;line-height:14px;color:#6c6c6c;width:40px;text-align:right">74</div>
<div class="r" style="left:62px;top:161px;width:748px;height:23px;background:#283d31;"></div>
<div class="t c" style="left:0px;top:168px;font-size:14px;line-height:14px;color:#6c6c6c;width:40px;text-align:right">75</div>
<div class="t c" style="left:62px;top:168px;font-size:14px;line-height:14px;color:#f4f4f4;"><span style="color:#7f7f6f">/// 数组</span></div>
<div class="t c" style="left:0px;top:191px;font-size:14px;line-height:14px;color:#6c6c6c;width:40px;text-align:right">76</div>
<div class="t c" style="left:62px;top:191px;font-size:14px;line-height:14px;color:#f4f4f4;"><span style="color:#f4f4f4">$数组</span><span style="color:#7cc04a"> = </span><span style="color:#5cc8ec">创建数组</span><span style="color:#7cc04a">(</span><span style="color:#1e9e1e">"one"</span><span style="color:#7cc04a">, </span><span style="color:#1e9e1e">"two"</span><span style="color:#7cc04a">, </span><span style="color:#1e9e1e">"three"</span><span style="color:#7cc04a">);</span></div>
<div class="t c" style="left:0px;top:214px;font-size:14px;line-height:14px;color:#6c6c6c;width:40px;text-align:right">77</div>
<div class="t c" style="left:62px;top:214px;font-size:14px;line-height:14px;color:#f4f4f4;"><span style="color:#5cc8ec">综合输出</span><span style="color:#7cc04a"> (</span><span style="color:#f4f4f4">$数组</span><span style="color:#7cc04a">);</span></div>
<div class="t c" style="left:0px;top:237px;font-size:14px;line-height:14px;color:#6c6c6c;width:40px;text-align:right">78</div>
<div class="r" style="left:62px;top:253px;width:748px;height:23px;background:#283d31;"></div>
<div class="t c" style="left:0px;top:260px;font-size:14px;line-height:14px;color:#6c6c6c;width:40px;text-align:right">79</div>
<div class="t c" style="left:62px;top:260px;font-size:14px;line-height:14px;color:#f4f4f4;"><span style="color:#7f7f6f">/// 判断</span></div>
<div class="t c" style="left:0px;top:283px;font-size:14px;line-height:14px;color:#6c6c6c;width:40px;text-align:right">80</div>
<div class="t c" style="left:62px;top:283px;font-size:14px;line-height:14px;color:#f4f4f4;"><span style="color:#e0801a">判断</span><span style="color:#7cc04a"> ( </span><span style="color:#f4f4f4">$变量c</span><span style="color:#7cc04a"> ){</span></div>
<div class="t c" style="left:0px;top:306px;font-size:14px;line-height:14px;color:#6c6c6c;width:40px;text-align:right">81</div>
<div class="t c" style="left:62px;top:306px;font-size:14px;line-height:14px;color:#f4f4f4;">    <span style="color:#e0801a">条件</span> <span style="color:#ff1010">1</span><span style="color:#7cc04a">:</span></div>
<div class="t c" style="left:0px;top:329px;font-size:14px;line-height:14px;color:#6c6c6c;width:40px;text-align:right">82</div>
<div class="t c" style="left:62px;top:329px;font-size:14px;line-height:14px;color:#f4f4f4;">        <span style="color:#e0801a">输出</span> <span style="color:#1e9e1e">"变量c 等于一&lt;br&gt;"</span><span style="color:#7cc04a">;</span></div>
<div class="t c" style="left:0px;top:352px;font-size:14px;line-height:14px;color:#6c6c6c;width:40px;text-align:right">83</div>
<div class="t c" style="left:62px;top:352px;font-size:14px;line-height:14px;color:#f4f4f4;">        <span style="color:#e0801a">跳出</span><span style="color:#7cc04a">;</span></div>
<div class="t c" style="left:0px;top:375px;font-size:14px;line-height:14px;color:#6c6c6c;width:40px;text-align:right">84</div>
<div class="t c" style="left:62px;top:375px;font-size:14px;line-height:14px;color:#f4f4f4;">    <span style="color:#e0801a">条件</span> <span style="color:#ff1010">2</span><span style="color:#7cc04a">:</span></div>
<div class="t c" style="left:0px;top:398px;font-size:14px;line-height:14px;color:#6c6c6c;width:40px;text-align:right">85</div>
<div class="t c" style="left:62px;top:398px;font-size:14px;line-height:14px;color:#f4f4f4;">        <span style="color:#e0801a">输出</span> <span style="color:#1e9e1e">"变量c 等于二&lt;br&gt;"</span><span style="color:#7cc04a">;</span></div>
<div class="t c" style="left:0px;top:421px;font-size:14px;line-height:14px;color:#6c6c6c;width:40px;text-align:right">86</div>
<div class="t c" style="left:62px;top:421px;font-size:14px;line-height:14px;color:#f4f4f4;">        <span style="color:#e0801a">跳出</span><span style="color:#7cc04a">;</span></div>
<div class="t c" style="left:0px;top:444px;font-size:14px;line-height:14px;color:#6c6c6c;width:40px;text-align:right">87</div>
<div class="t c" style="left:62px;top:444px;font-size:14px;line-height:14px;color:#f4f4f4;">    <span style="color:#e0801a">未执行条件</span><span style="color:#7cc04a">:</span></div>
<div class="t c" style="left:0px;top:467px;font-size:14px;line-height:14px;color:#6c6c6c;width:40px;text-align:right">88</div>
<div class="t c" style="left:62px;top:467px;font-size:14px;line-height:14px;color:#f4f4f4;">        <span style="color:#e0801a">输出</span> <span style="color:#1e9e1e">"变量c 不等于1到2之间的值&lt;br&gt;"</span><span style="color:#7cc04a">;</span></div>
<div class="t c" style="left:0px;top:490px;font-size:14px;line-height:14px;color:#6c6c6c;width:40px;text-align:right">89</div>
<div class="t c" style="left:62px;top:490px;font-size:14px;line-height:14px;color:#f4f4f4;"><span style="color:#7cc04a">}</span></div>
<div class="t c" style="left:0px;top:513px;font-size:14px;line-height:14px;color:#6c6c6c;width:40px;text-align:right">90</div>
<div class="r" style="left:62px;top:529px;width:748px;height:23px;background:#283d31;"></div>
<div class="t c" style="left:0px;top:536px;font-size:14px;line-height:14px;color:#6c6c6c;width:40px;text-align:right">91</div>
<div class="t c" style="left:62px;top:536px;font-size:14px;line-height:14px;color:#f4f4f4;"><span style="color:#7f7f6f">/// 类</span></div>
<div class="t c" style="left:0px;top:559px;font-size:14px;line-height:14px;color:#6c6c6c;width:40px;text-align:right">92</div>
<div class="t c" style="left:62px;top:559px;font-size:14px;line-height:14px;color:#f4f4f4;"><span style="color:#e0801a">类</span> <span style="color:#5cc8ec">算数运算</span> <span style="color:#7cc04a">{</span></div>
<div class="r" style="left:62px;top:69px;width:748px;height:1px;background:#3e3e3e;"></div>
<div class="r" style="left:49px;top:75px;width:9px;height:9px;border:1px solid #5a5a5a;background:#272727"></div>
<div class="r" style="left:51px;top:80px;width:7px;height:1px;background:#6a6a6a;"></div>
<div class="r" style="left:49px;top:282px;width:9px;height:9px;border:1px solid #5a5a5a;background:#272727"></div>
<div class="r" style="left:51px;top:287px;width:7px;height:1px;background:#6a6a6a;"></div>
<div class="r" style="left:49px;top:558px;width:9px;height:9px;border:1px solid #5a5a5a;background:#272727"></div>
<div class="r" style="left:51px;top:563px;width:7px;height:1px;background:#6a6a6a;"></div>
<div class="r" style="left:62px;top:293px;width:1px;height:202px;background:#5e5e5e;"></div>
<div class="r" style="left:79px;top:310px;width:1px;height:139px;background:#5e5e5e;"></div>
<div class="r" style="left:82px;top:356px;width:1px;height:131px;background:#5e5e5e;"></div>
<div class="r" style="left:79px;top:310px;width:8px;height:1px;background:#5e5e5e;"></div>
<svg class="r" style="left:86px;top:308px;" width="4" height="5" viewBox="0 0 4 5"><path d="M0 0 L3.5 2.5 L0 5 Z" fill="#5e5e5e"/></svg>
<div class="r" style="left:79px;top:379px;width:8px;height:1px;background:#5e5e5e;"></div>
<svg class="r" style="left:86px;top:377px;" width="4" height="5" viewBox="0 0 4 5"><path d="M0 0 L3.5 2.5 L0 5 Z" fill="#5e5e5e"/></svg>
<div class="r" style="left:79px;top:448px;width:8px;height:1px;background:#5e5e5e;"></div>
<svg class="r" style="left:86px;top:446px;" width="4" height="5" viewBox="0 0 4 5"><path d="M0 0 L3.5 2.5 L0 5 Z" fill="#5e5e5e"/></svg>
<div class="r" style="left:82px;top:356px;width:34px;height:1px;background:#5e5e5e;"></div>
<div class="r" style="left:82px;top:425px;width:34px;height:1px;background:#5e5e5e;"></div>
<svg class="r" style="left:79px;top:484px;" width="7" height="4" viewBox="0 0 7 4"><path d="M0 0 H7 L3.5 4 Z" fill="#5e5e5e"/></svg>
<div class="r" style="left:91px;top:322px;width:1px;height:1px;background:#8a8a8a;"></div>
<div class="r" style="left:91px;top:325px;width:1px;height:1px;background:#8a8a8a;"></div>
<div class="r" style="left:91px;top:328px;width:1px;height:1px;background:#8a8a8a;"></div>
<div class="r" style="left:91px;top:331px;width:1px;height:1px;background:#8a8a8a;"></div>
<div class="r" style="left:91px;top:334px;width:1px;height:1px;background:#8a8a8a;"></div>
<div class="r" style="left:91px;top:337px;width:1px;height:1px;background:#8a8a8a;"></div>
<div class="r" style="left:91px;top:340px;width:1px;height:1px;background:#8a8a8a;"></div>
<div class="r" style="left:91px;top:343px;width:1px;height:1px;background:#8a8a8a;"></div>
<div class="r" style="left:91px;top:346px;width:1px;height:1px;background:#8a8a8a;"></div>
<div class="r" style="left:91px;top:349px;width:1px;height:1px;background:#8a8a8a;"></div>
<div class="r" style="left:91px;top:352px;width:1px;height:1px;background:#8a8a8a;"></div>
<div class="r" style="left:91px;top:355px;width:1px;height:1px;background:#8a8a8a;"></div>
<div class="r" style="left:91px;top:358px;width:1px;height:1px;background:#8a8a8a;"></div>
<div class="r" style="left:91px;top:361px;width:1px;height:1px;background:#8a8a8a;"></div>
<div class="r" style="left:91px;top:364px;width:1px;height:1px;background:#8a8a8a;"></div>
<div class="r" style="left:91px;top:367px;width:1px;height:1px;background:#8a8a8a;"></div>
<div class="r" style="left:91px;top:390px;width:1px;height:1px;background:#8a8a8a;"></div>
<div class="r" style="left:91px;top:393px;width:1px;height:1px;background:#8a8a8a;"></div>
<div class="r" style="left:91px;top:396px;width:1px;height:1px;background:#8a8a8a;"></div>
<div class="r" style="left:91px;top:399px;width:1px;height:1px;background:#8a8a8a;"></div>
<div class="r" style="left:91px;top:402px;width:1px;height:1px;background:#8a8a8a;"></div>
<div class="r" style="left:91px;top:405px;width:1px;height:1px;background:#8a8a8a;"></div>
<div class="r" style="left:91px;top:408px;width:1px;height:1px;background:#8a8a8a;"></div>
<div class="r" style="left:91px;top:411px;width:1px;height:1px;background:#8a8a8a;"></div>
<div class="r" style="left:91px;top:414px;width:1px;height:1px;background:#8a8a8a;"></div>
<div class="r" style="left:91px;top:417px;width:1px;height:1px;background:#8a8a8a;"></div>
<div class="r" style="left:91px;top:420px;width:1px;height:1px;background:#8a8a8a;"></div>
<div class="r" style="left:91px;top:423px;width:1px;height:1px;background:#8a8a8a;"></div>
<div class="r" style="left:91px;top:426px;width:1px;height:1px;background:#8a8a8a;"></div>
<div class="r" style="left:91px;top:429px;width:1px;height:1px;background:#8a8a8a;"></div>
<div class="r" style="left:91px;top:432px;width:1px;height:1px;background:#8a8a8a;"></div>
<div class="r" style="left:91px;top:435px;width:1px;height:1px;background:#8a8a8a;"></div>
<div class="r" style="left:91px;top:460px;width:1px;height:1px;background:#8a8a8a;"></div>
<div class="r" style="left:91px;top:463px;width:1px;height:1px;background:#8a8a8a;"></div>
<div class="r" style="left:91px;top:466px;width:1px;height:1px;background:#8a8a8a;"></div>
<div class="r" style="left:91px;top:469px;width:1px;height:1px;background:#8a8a8a;"></div>
<div class="r" style="left:91px;top:472px;width:1px;height:1px;background:#8a8a8a;"></div>
<div class="r" style="left:91px;top:475px;width:1px;height:1px;background:#8a8a8a;"></div>
<div class="r" style="left:91px;top:478px;width:1px;height:1px;background:#8a8a8a;"></div>
<div class="r" style="left:91px;top:481px;width:1px;height:1px;background:#8a8a8a;"></div>
</div>
<div class="r" style="left:1032px;top:440px;width:10px;height:96px;background:#474747;"></div>
<div class="r" style="left:218px;top:670px;width:828px;height:23px;background:#404040;"></div>
<div class="r" style="left:275px;top:670px;width:63px;height:22px;background:#007ad2;border-radius:0 0 3px 3px"></div>
<div class="t u" style="left:223px;top:678px;font-size:12px;line-height:12px;color:#f0f0f0;">html主体</div>
<div class="t u" style="left:282px;top:678px;font-size:12px;line-height:12px;color:#fff;">html头部</div>
<div class="t u" style="left:340px;top:678px;font-size:12px;line-height:12px;color:#f0f0f0;">CSS部分</div>
<div class="t u" style="left:395px;top:678px;font-size:12px;line-height:12px;color:#f0f0f0;">JS部分</div>
<div class="t u" style="left:444px;top:678px;font-size:12px;line-height:12px;color:#f0f0f0;">JSON部分</div>
<div class="t u" style="left:1018px;top:676px;font-size:12px;line-height:12px;color:#f0f0f0;">100%</div>
<div class="r" style="left:1px;top:693px;width:1045px;height:2px;background:#f2f2f2;"></div>
<div class="r" style="left:1045px;top:80px;width:1px;height:613px;background:#3c3c3c;"></div>
<div class="r" style="left:1px;top:695px;width:1045px;height:167px;background:#404040;"></div>
<div class="r" style="left:3px;top:717px;width:1042px;height:1px;background:#0580dc;"></div>
<div class="r" style="left:3px;top:695px;width:57px;height:22px;background:#007ad2"></div>
<svg class="r" style="left:11px;top:696px;" width="13" height="17" viewBox="0 0 13 17"><path d="M4 12 L3 10 Q1 8 1 6 Q1 1 6.5 1 Q12 1 12 6 Q12 8 10 10 L9 12 Z" fill="#f4c820" stroke="#6a4a00" stroke-width="0.6"/><path d="M4 5 H9 M6.5 5 V9" stroke="#5a4000" stroke-width="1.6"/><path d="M4.3 5 H8.7 M6.5 5 V8.6" stroke="#ffd830" stroke-width="0.7"/><rect x="5" y="13.2" width="3" height="1" fill="#b89060"/><rect x="5" y="15.2" width="3" height="1" fill="#b89060"/></svg>
<div class="t u" style="left:28px;top:702px;font-size:12px;line-height:12px;color:#fff;">提示</div>
<svg class="r" style="left:63px;top:698px;" width="16" height="16" viewBox="0 0 16 16"><path d="M10 1.5 H1.5 V14.5 H10" stroke="#c8c8c8" stroke-width="1.3" fill="none"/><rect x="4" y="7.2" width="6" height="1.8" fill="#c8c8c8"/><path d="M8 4 L15 8 L8 12 L9.5 8 Z" fill="#c8c8c8"/></svg>
<div class="t u" style="left:82px;top:702px;font-size:12px;line-height:12px;color:#eee;">输出</div>
<svg class="r" style="left:116px;top:699px;" width="16" height="14" viewBox="0 0 16 14"><circle cx="12.6" cy="5.4" r="3" stroke="#c8c8c8" stroke-width="1.3" fill="none"/><path d="M10.6 7.6 L7.2 11.6" stroke="#c8c8c8" stroke-width="1.6"/><g fill="#d0d0d0"><rect x="6" y="2" width="3" height="1"/><rect x="5" y="4" width="3" height="1"/><rect x="6" y="6" width="2" height="1"/><rect x="4" y="8" width="3" height="1"/><rect x="2" y="10" width="3" height="1"/></g></svg>
<div class="t u" style="left:136px;top:702px;font-size:12px;line-height:12px;color:#eee;">搜索</div>
<div class="r" style="left:972px;top:695px;width:73px;height:22px;background:#1c8ee6;border-radius:0 0 2px 2px"></div>
<div class="t u" style="left:974px;top:702px;font-size:12px;line-height:12px;color:#fff;">显示子类</div>
<svg class="r" style="left:1029px;top:700px;" width="12" height="10" viewBox="0 0 12 10"><path d="M0.5 0.5 H11.5 L6 9.5 Z" fill="#fff"/></svg>
<div class="t p" style="left:3px;top:724px;font-size:15px;line-height:15px;color:#c8c8c8;font-family:'Liberation Mono',monospace">*</div>
<div class="t p" style="left:28px;top:722px;font-size:15px;line-height:15px;color:#c8c8c8;">支持库名称：</div>
<div class="t p" style="left:118px;top:722px;font-size:15px;line-height:15px;color:#2196e8;">PHP 错误处理</div>
<div class="t p" style="left:3px;top:743px;font-size:15px;line-height:15px;color:#c8c8c8;font-family:'Liberation Mono',monospace">*</div>
<div class="t p" style="left:28px;top:741px;font-size:15px;line-height:15px;color:#c8c8c8;">支持库备注信息：</div>
<div class="t p" style="left:3px;top:760px;font-size:15px;line-height:15px;color:#f0f0f0;">允许用户定义错误处理规则，并修改记录错误的方式。允许用户对应用程序进行日志记录，并把日志消息发送到电子邮件、系统日志或其他的机器。</div>
</body></html>
